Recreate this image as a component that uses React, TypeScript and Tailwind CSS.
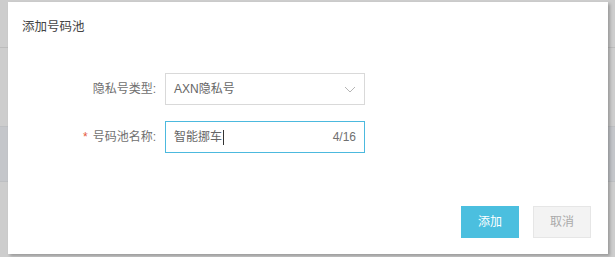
import React from 'react';

const font = { fontFamily: '"Liberation Sans", "Noto Sans CJK SC", sans-serif' };

function FormRow({ label, required, children }: { label: string; required?: boolean; children: React.ReactNode }) {
  return (
    <div className="flex items-center h-[32px]">
      <div className="w-[149px] pr-[1px] text-right text-[12px] text-[#707070]">
        {required && <span className="text-[#e4593b] mr-[5px]">*</span>}
        {label}
      </div>
      <div className="ml-[8px]">{children}</div>
    </div>
  );
}

export default function App() {
  return (
    <div className="relative w-[615px] h-[257px] bg-[#cdcdcd] overflow-hidden" style={font}>
      {/* page behind the mask */}
      <div className="h-[48px] border-b border-[#bcbcbc]" />
      <div className="mt-[78px] h-[56px] bg-[#c4c6ca] border-y border-[#bdbfc2]" />

      {/* Dialog */}
      <div className="absolute left-[8px] top-[2px] w-[600px] h-[252px] bg-white shadow-[2px_2px_3px_rgba(0,0,0,0.25)] flex flex-col">
        <div className="pt-[15px] pl-[14px] h-[35px] text-[12.5px] leading-[20px] text-[#444]">添加号码池</div>

        <div className="mt-[36px] flex flex-col gap-[16px]">
          <FormRow label="隐私号类型:">
            <div className="w-[200px] h-[32px] border border-[#d9d9d9] flex items-center justify-between pl-[8px] pr-[8px] text-[12px] text-[#666]">
              <span>AXN隐私号</span>
              <svg width="12" height="7" viewBox="0 0 12 7" fill="none">
                <path d="M1 1L6 6L11 1" stroke="#b5b5b5" strokeWidth="1" />
              </svg>
            </div>
          </FormRow>
          <FormRow label="号码池名称:" required>
            <div className="w-[200px] h-[32px] border border-[#4cb9de] flex items-center justify-between pl-[8px] pr-[8px] text-[12px] text-[#666]">
              <span className="flex items-center">
                智能挪车
                <span className="ml-[1px] w-[1px] h-[15px] bg-[#333]" />
              </span>
              <span className="text-[#707070]">4/16</span>
            </div>
          </FormRow>
        </div>

        <div className="mt-auto flex justify-end gap-[14px] pr-[17px] pb-[16px]">
          <button className="w-[58px] h-[32px] bg-[#4bbfdf] text-white text-[12px]">添加</button>
          <button className="w-[58px] h-[32px] bg-[#f3f3f3] border border-[#e6e6e6] text-[#aaa] text-[12px]">取消</button>
        </div>
      </div>
    </div>
  );
}
